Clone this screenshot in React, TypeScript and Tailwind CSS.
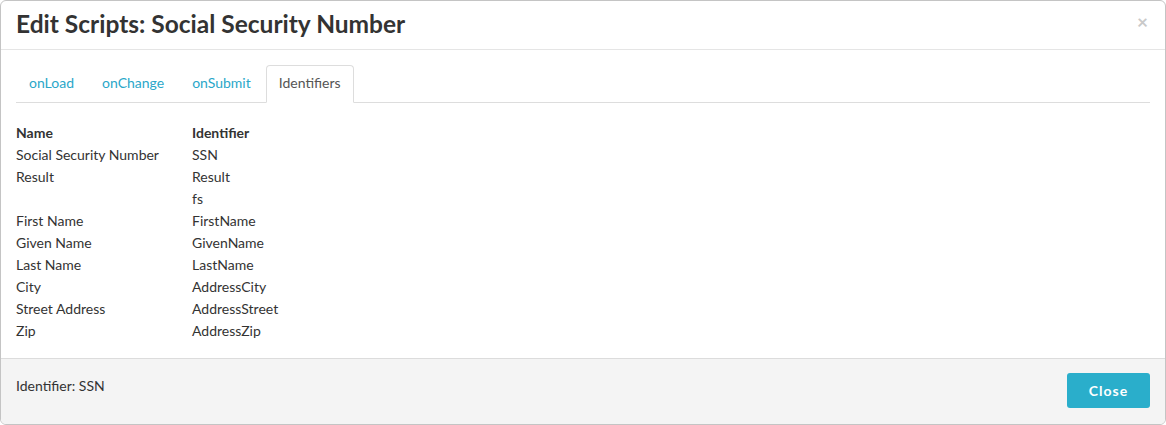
import React from "react";

const rows: [string, string][] = [
  ["Social Security Number", "SSN"],
  ["Result", "Result"],
  ["", "fs"],
  ["First Name", "FirstName"],
  ["Given Name", "GivenName"],
  ["Last Name", "LastName"],
  ["City", "AddressCity"],
  ["Street Address", "AddressStreet"],
  ["Zip", "AddressZip"],
];

export default function App() {
  return (
    <div className="w-[1166px] h-[425px] bg-white" style={{ fontFamily: "Lato, 'Noto Sans', sans-serif" }}>
      <div className="w-[1166px] h-[425px] border border-[#c4c4c4] rounded-[6px] overflow-hidden flex flex-col text-[#333]">
        <div className="h-[49px] border-b border-[#e5e5e5] flex items-center justify-between pl-[15px] pr-[17px] shrink-0">
          <h1 className="text-[24.5px] font-bold leading-none text-[#333] -mt-[2px]">Edit Scripts: Social Security Number</h1>
          <span className="text-[19px] font-bold text-[#c9c9c9] leading-none -mt-[8px]">×</span>
        </div>
        <div className="flex-1 px-[15px] pt-[15px]">
          <div className="flex border-b border-[#dddddd] h-[38px]">
            {["onLoad", "onChange", "onSubmit"].map((t) => (
              <div key={t} className="px-[12px] mr-[2px] h-[37px] flex items-center pb-[3px] text-[14px] text-[#2aa7c9] border border-transparent">
                {t}
              </div>
            ))}
            <div className="px-[12px] h-[38px] flex items-center pb-[3px] text-[14px] text-[#555] bg-white border border-[#dddddd] border-b-white rounded-t-[4px]">
              Identifiers
            </div>
          </div>
          <div className="pt-[19px] text-[14px] leading-[22px]">
            <div className="flex font-bold">
              <div className="w-[176px]">Name</div>
              <div>Identifier</div>
            </div>
            {rows.map(([n, i], idx) => (
              <div key={idx} className="flex h-[22px]">
                <div className="w-[176px]">{n}</div>
                <div>{i}</div>
              </div>
            ))}
          </div>
        </div>
        <div className="h-[66px] shrink-0 bg-[#f4f4f4] border-t border-[#dcdcdc] flex items-center justify-between pl-[15px] pr-[15px]">
          <span className="text-[14px] text-[#333] -mt-[12px]">Identifier: SSN</span>
          <button className="w-[83px] h-[35px] -mt-[3px] bg-[#2aaecb] text-white font-bold text-[14px] tracking-[1px] rounded-[3px]">Close</button>
        </div>
      </div>
    </div>
  );
}
